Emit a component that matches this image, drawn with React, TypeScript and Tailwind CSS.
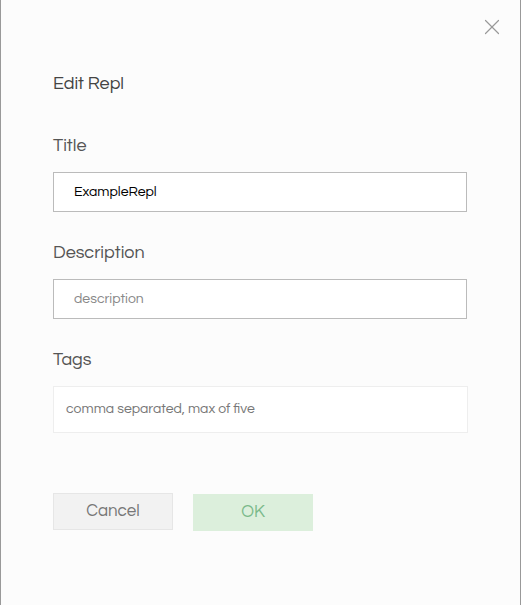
import { X } from "lucide-react";

const font = { fontFamily: "Questrial, Lato, 'Noto Sans', sans-serif" };

function Label({ children }: { children: React.ReactNode }) {
  return <div className="text-[18px] leading-6 text-[#555]">{children}</div>;
}

export default function App() {
  return (
    <div
      className="relative h-[605px] w-[521px] border-x border-[#999] bg-[#fcfcfc] pl-[52px] pr-[53px] text-[#444]"
      style={font}
    >
      <button className="absolute right-[15px] top-[14px] text-[#999]">
        <X size={26} strokeWidth={1.1} />
      </button>

      <h1 className="pt-[72px] text-[18px] leading-6 text-[#444]">Edit Repl</h1>

      <div className="mt-[38px]">
        <Label>Title</Label>
        <div className="mt-[14px] flex h-[40px] items-center border border-[#bbb] bg-white px-[20px] text-[14px] text-black">
          ExampleRepl
        </div>
      </div>

      <div className="mt-[29px]">
        <Label>Description</Label>
        <div className="mt-[14px] flex h-[40px] items-center border border-[#bbb] bg-white px-[20px] text-[14px] text-[#888]">
          description
        </div>
      </div>

      <div className="mt-[29px]">
        <Label>Tags</Label>
        <div className="mt-[14px] flex h-[47px] w-[415px] items-center border border-[#eee] bg-white px-[12px] text-[14px] text-[#777]">
          comma separated, max of five
        </div>
      </div>

      <div className="mt-[60px] flex gap-[20px]">
        <button className="h-[37px] w-[120px] border border-[#e6e6e6] bg-[#f2f2f2] text-[17px] text-[#777]">
          Cancel
        </button>
        <button className="mt-[1px] h-[37px] w-[120px] bg-[#dcefdc] text-[17px] text-[#7ab98a]">
          OK
        </button>
      </div>
    </div>
  );
}
